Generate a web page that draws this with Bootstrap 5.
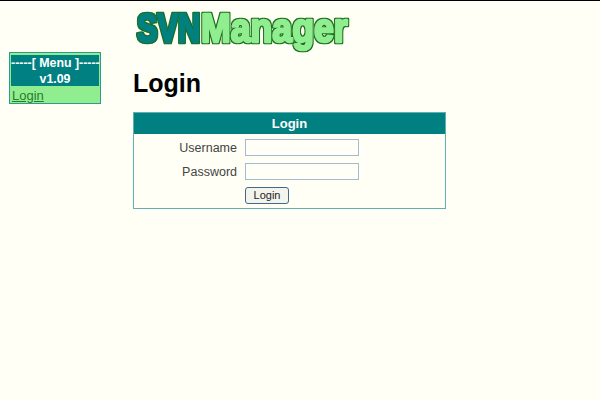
<!DOCTYPE html>
<html><head><meta charset="utf-8">
<link href="https://cdn.jsdelivr.net/npm/bootstrap@5.3.0/dist/css/bootstrap.min.css" rel="stylesheet">
<style>
html,body{height:100%}
body{background:#fffff5;border-top:1px solid #000;font-family:"Liberation Sans",Arial,sans-serif;color:#000;overflow:hidden}
.page-wrap{height:399px}
.side-col{width:133px;padding:51px 0 0 9px;flex:none}
.menu-box{width:92px;height:52px;background:#90ee90;border:2px solid #90ee90;outline:1px solid #2e9c8c;outline-offset:-1px;font-size:13px;line-height:16px}
.menu-head{background:#008080;color:#fff;font-weight:700;font-size:12.4px;height:31px;padding-top:1px;line-height:15.5px;text-align:center;white-space:nowrap;margin:1px 0 0}
.menu-link{color:#2c7a2c;padding-left:1px;display:block;margin-top:2px}
.logo-svg{display:block;margin:8px 0 0 2px;overflow:visible}
.page-title{font-size:25px;font-weight:700;line-height:28px;margin:18px 0 15px}
.login-box{width:313px;height:97px;border:1px solid #5fb0b0;background:#fffff5}
.login-head{background:#008080;color:#fff;font-weight:700;font-size:13px;height:21px;line-height:21px;text-align:center}
.login-form{padding-top:1px}
.form-line{height:24px;font-size:12.5px;color:#444}
.form-line label{width:103px;text-align:right;margin-right:8px;padding-top:1px;line-height:16px}
.btn-spacer{width:111px}
.txt-field{width:114px;height:17px;border:1px solid #a3bbd0;background:#fffff8;padding:0;border-radius:0}
.go-btn{width:44px;height:17px;font-size:11px;line-height:13px;padding:0;background:#f4f4ee;color:#222;border:1px solid #44688c;border-radius:3px}
</style></head>
<body>
<div class="d-flex page-wrap">
  <div class="side-col">
    <div class="menu-box">
      <div class="menu-head">-----[ Menu ]-----<br>v1.09</div>
      <a class="menu-link" href="#">Login</a>
    </div>
  </div>
  <div class="flex-grow-1">
    <svg class="logo-svg" width="220" height="42" viewBox="0 0 220 42" role="img" aria-label="SVNManager">
      <defs>
        <filter id="fat" x="-5%" y="-15%" width="110%" height="130%" color-interpolation-filters="sRGB">
          <feMorphology in="SourceAlpha" operator="dilate" radius="1.2" result="grown"/>
          <feFlood flood-color="#1c6e1c"/>
          <feComposite in2="grown" operator="in" result="edge"/>
          <feMerge result="all"><feMergeNode in="edge"/><feMergeNode in="SourceGraphic"/></feMerge>
          <feGaussianBlur in="all" stdDeviation="0.35"/>
        </filter>
      </defs>
      <g font-family="Liberation Sans" font-weight="700" font-size="41" stroke-width="2.6" stroke-linejoin="round" filter="url(#fat)">
        <text transform="translate(2 33) scale(.75 1)" fill="#008080" stroke="#008080">SVN</text>
        <text transform="translate(66 33) scale(.87 1)" fill="#90ee90" stroke="#90ee90">Manager</text>
      </g>
    </svg>
    <h1 class="page-title">Login</h1>
    <div class="login-box">
      <div class="login-head">Login</div>
      <form class="login-form">
        <div class="d-flex align-items-center form-line"><label for="u">Username</label><input id="u" class="txt-field" type="text"></div>
        <div class="d-flex align-items-center form-line"><label for="p">Password</label><input id="p" class="txt-field" type="password"></div>
        <div class="d-flex align-items-center form-line"><span class="btn-spacer"></span><button class="go-btn" type="button">Login</button></div>
      </form>
    </div>
  </div>
</div>
</body></html>
